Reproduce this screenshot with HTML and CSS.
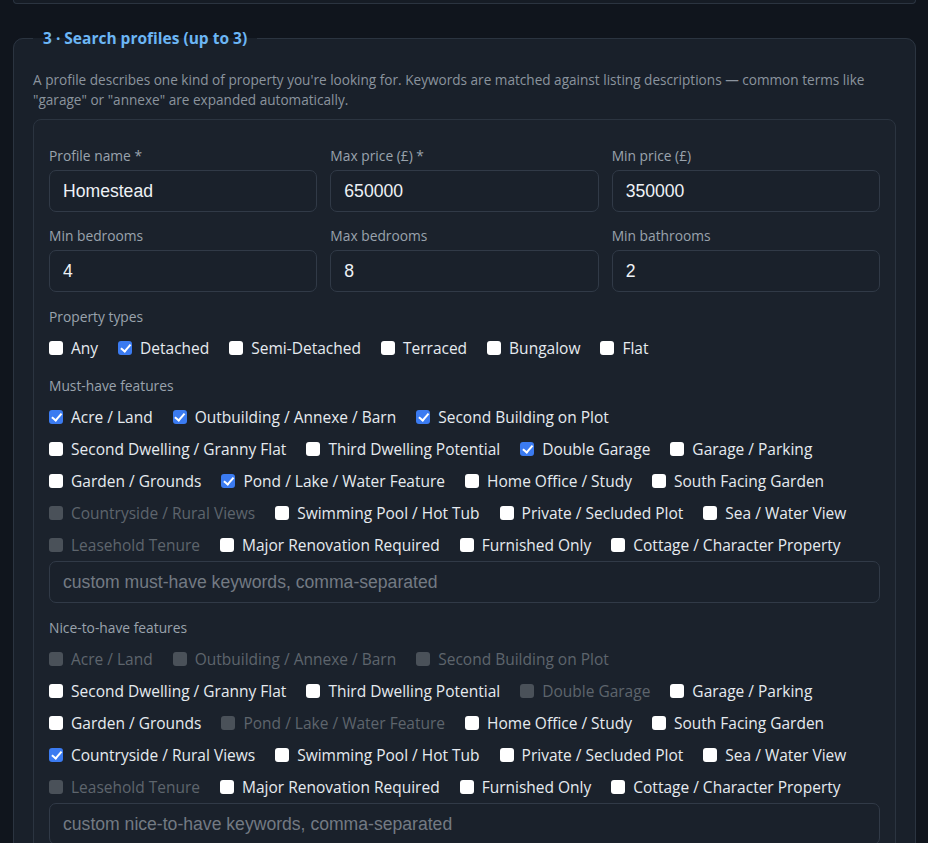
FILE: index.html
```html
<!DOCTYPE html>
<html lang="en">
<head>
<meta charset="utf-8">
<title>Search profiles</title>
<link rel="stylesheet" href="styles.css">
</head>
<body>
<div class="page">
  <div class="prev-card"></div>

  <fieldset class="section">
    <legend class="section-title">3 · Search profiles (up to 3)</legend>
    <p class="hint">A profile describes one kind of property you're looking for. Keywords are matched against listing descriptions — common terms like "garage" or "annexe" are expanded automatically.</p>

    <div class="profile">
      <div class="fields">
        <label class="field"><span class="field-label">Profile name *</span><input class="text-input" type="text" value="Homestead"></label>
        <label class="field"><span class="field-label">Max price (£) *</span><input class="text-input" type="text" value="650000"></label>
        <label class="field"><span class="field-label">Min price (£)</span><input class="text-input" type="text" value="350000"></label>
        <label class="field"><span class="field-label">Min bedrooms</span><input class="text-input" type="text" value="4"></label>
        <label class="field"><span class="field-label">Max bedrooms</span><input class="text-input" type="text" value="8"></label>
        <label class="field"><span class="field-label">Min bathrooms</span><input class="text-input" type="text" value="2"></label>
      </div>

      <div class="group group-types">
        <div class="group-label">Property types</div>
        <div class="checks">
          <label class="chk"><input type="checkbox"><span>Any</span></label>
          <label class="chk"><input type="checkbox" checked><span>Detached</span></label>
          <label class="chk"><input type="checkbox"><span>Semi-Detached</span></label>
          <label class="chk"><input type="checkbox"><span>Terraced</span></label>
          <label class="chk"><input type="checkbox"><span>Bungalow</span></label>
          <label class="chk"><input type="checkbox"><span>Flat</span></label>
        </div>
      </div>

      <div class="group">
        <div class="group-label">Must-have features</div>
        <div class="checks">
          <label class="chk"><input type="checkbox" checked><span>Acre / Land</span></label>
          <label class="chk"><input type="checkbox" checked><span>Outbuilding / Annexe / Barn</span></label>
          <label class="chk"><input type="checkbox" checked><span>Second Building on Plot</span></label>
          <label class="chk"><input type="checkbox"><span>Second Dwelling / Granny Flat</span></label>
          <label class="chk"><input type="checkbox"><span>Third Dwelling Potential</span></label>
          <label class="chk"><input type="checkbox" checked><span>Double Garage</span></label>
          <label class="chk"><input type="checkbox"><span>Garage / Parking</span></label>
          <label class="chk"><input type="checkbox"><span>Garden / Grounds</span></label>
          <label class="chk"><input type="checkbox" checked><span>Pond / Lake / Water Feature</span></label>
          <label class="chk"><input type="checkbox"><span>Home Office / Study</span></label>
          <label class="chk"><input type="checkbox"><span>South Facing Garden</span></label>
          <label class="chk is-disabled"><input type="checkbox" disabled><span>Countryside / Rural Views</span></label>
          <label class="chk"><input type="checkbox"><span>Swimming Pool / Hot Tub</span></label>
          <label class="chk"><input type="checkbox"><span>Private / Secluded Plot</span></label>
          <label class="chk"><input type="checkbox"><span>Sea / Water View</span></label>
          <label class="chk is-disabled"><input type="checkbox" disabled><span>Leasehold Tenure</span></label>
          <label class="chk"><input type="checkbox"><span>Major Renovation Required</span></label>
          <label class="chk"><input type="checkbox"><span>Furnished Only</span></label>
          <label class="chk"><input type="checkbox"><span>Cottage / Character Property</span></label>
        </div>
        <input class="text-input custom" type="text" placeholder="custom must-have keywords, comma-separated">
      </div>

      <div class="group">
        <div class="group-label">Nice-to-have features</div>
        <div class="checks">
          <label class="chk is-disabled"><input type="checkbox" disabled><span>Acre / Land</span></label>
          <label class="chk is-disabled"><input type="checkbox" disabled><span>Outbuilding / Annexe / Barn</span></label>
          <label class="chk is-disabled"><input type="checkbox" disabled><span>Second Building on Plot</span></label>
          <label class="chk"><input type="checkbox"><span>Second Dwelling / Granny Flat</span></label>
          <label class="chk"><input type="checkbox"><span>Third Dwelling Potential</span></label>
          <label class="chk is-disabled"><input type="checkbox" disabled><span>Double Garage</span></label>
          <label class="chk"><input type="checkbox"><span>Garage / Parking</span></label>
          <label class="chk"><input type="checkbox"><span>Garden / Grounds</span></label>
          <label class="chk is-disabled"><input type="checkbox" disabled><span>Pond / Lake / Water Feature</span></label>
          <label class="chk"><input type="checkbox"><span>Home Office / Study</span></label>
          <label class="chk"><input type="checkbox"><span>South Facing Garden</span></label>
          <label class="chk"><input type="checkbox" checked><span>Countryside / Rural Views</span></label>
          <label class="chk"><input type="checkbox"><span>Swimming Pool / Hot Tub</span></label>
          <label class="chk"><input type="checkbox"><span>Private / Secluded Plot</span></label>
          <label class="chk"><input type="checkbox"><span>Sea / Water View</span></label>
          <label class="chk is-disabled"><input type="checkbox" disabled><span>Leasehold Tenure</span></label>
          <label class="chk"><input type="checkbox"><span>Major Renovation Required</span></label>
          <label class="chk"><input type="checkbox"><span>Furnished Only</span></label>
          <label class="chk"><input type="checkbox"><span>Cottage / Character Property</span></label>
        </div>
        <input class="text-input custom" type="text" placeholder="custom nice-to-have keywords, comma-separated">
      </div>
    </div>
  </fieldset>
</div>
</body>
</html>
```

FILE: styles.css
```css
* { box-sizing: border-box; }

html, body {
  margin: 0;
  padding: 0;
  background: #10151d;
  height: 100%;
  overflow: hidden;
}

body {
  font-family: "Open Sans", "Noto Sans", sans-serif;
  color: #e6edf3;
}

.page {
  padding: 0 12px 0 13px;
}

.prev-card {
  height: 4px;
  background: #161c25;
  border: 1px solid #2b3440;
  border-top: none;
  border-radius: 0 0 10px 10px;
}

.section {
  margin: 24px 0 0;
  padding: 22px 19px 20px 19px;
  border: 1px solid #2b3440;
  border-radius: 10px;
  background: #19202a;
  min-width: 0;
}

.section-title {
  padding: 0 10px;
  margin-left: 0;
  font-size: 15.5px;
  font-weight: 700;
  line-height: 20px;
  color: #6cb6f5;
}

.hint {
  margin: 0 0 9px;
  font-size: 13.6px;
  line-height: 20px;
  color: #8b949e;
}

.profile {
  border: 1px solid #2b3440;
  border-radius: 8px;
  background: #1b222c;
  padding: 26px 15px 20px;
}

.fields {
  display: grid;
  grid-template-columns: repeat(3, 1fr);
  column-gap: 13px;
  row-gap: 14px;
}

.field {
  display: flex;
  flex-direction: column;
  gap: 4px;
}

.field-label,
.group-label {
  font-size: 13.8px;
  line-height: 20px;
  color: #9aa3ad;
}

.text-input {
  width: 100%;
  height: 42px;
  padding: 0 13px;
  border: 1px solid #313a47;
  border-radius: 7px;
  background: #1a212b;
  color: #eef2f6;
  font-family: "Liberation Sans", Arial, sans-serif;
  font-size: 17.6px;
  outline: none;
}

.text-input::placeholder {
  color: #737a83;
}

.group {
  margin-top: 15px;
}

.group-label {
  margin-bottom: 10px;
}

.group-types {
  margin-top: 15px;
}

.group-types + .group {
  margin-top: 17px;
}

.checks {
  display: flex;
  flex-wrap: wrap;
  row-gap: 10px;
}

.custom {
  margin-top: 5px;
}

.chk {
  display: flex;
  align-items: center;
  gap: 8px;
  height: 22px;
  margin-right: 20px;
  font-size: 15.5px;
  line-height: 22px;
  color: #e6ebf0;
  white-space: nowrap;
}

.chk input {
  appearance: none;
  -webkit-appearance: none;
  position: relative;
  flex: none;
  width: 14px;
  height: 14px;
  margin: -1px 0 0;
  border-radius: 3px;
  background: #ffffff;
}

.chk input:checked {
  background: #3b7bf1;
}

.chk input:checked::after {
  content: "";
  position: absolute;
  left: 4.6px;
  top: 1.6px;
  width: 3.5px;
  height: 7.5px;
  border: solid #ffffff;
  border-width: 0 2px 2px 0;
  transform: rotate(40deg);
}

.chk.is-disabled {
  color: #5e656d;
}

.chk.is-disabled input {
  background: #4a5159;
}
```
